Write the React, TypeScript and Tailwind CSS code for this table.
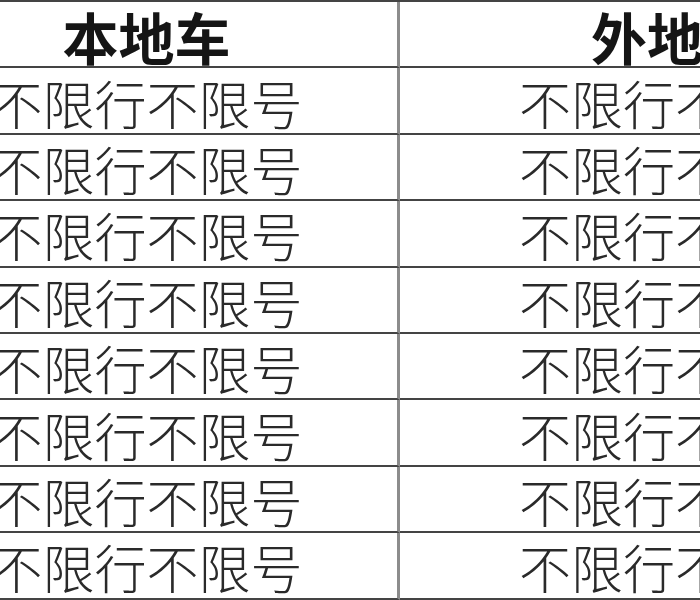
import React from 'react';

const rows = Array.from({ length: 8 }, () => ({
  local: '不限行不限号',
  remote: '不限行不限号',
}));

const cell = 'h-[66.4px] pt-1 border-b-2 border-[#444] flex items-center justify-center whitespace-nowrap overflow-hidden leading-none';

export default function App() {
  return (
    <div
      className="w-[700px] h-[600px] overflow-hidden bg-white"
      style={{ fontFamily: '"Noto Sans CJK SC", "Noto Sans", sans-serif' }}
    >
      <div className="-ml-[104px] w-[1054px] grid grid-cols-[504px_550px] border-t-2 border-[#444]">
        <div className={`${cell} border-r-[3px] border-r-[#8c8c8c] text-[56px] font-semibold text-[#151515]`}>
          本地车
        </div>
        <div className={`${cell} text-[56px] font-semibold text-[#151515]`}>外地车</div>
        {rows.map((row, i) => (
          <React.Fragment key={i}>
            <div className={`${cell} border-r-[3px] border-r-[#8c8c8c] text-[52px] font-light text-[#2a2a2a]`}>
              {row.local}
            </div>
            <div className={`${cell} text-[52px] font-light text-[#2a2a2a]`}>{row.remote}</div>
          </React.Fragment>
        ))}
      </div>
    </div>
  );
}
